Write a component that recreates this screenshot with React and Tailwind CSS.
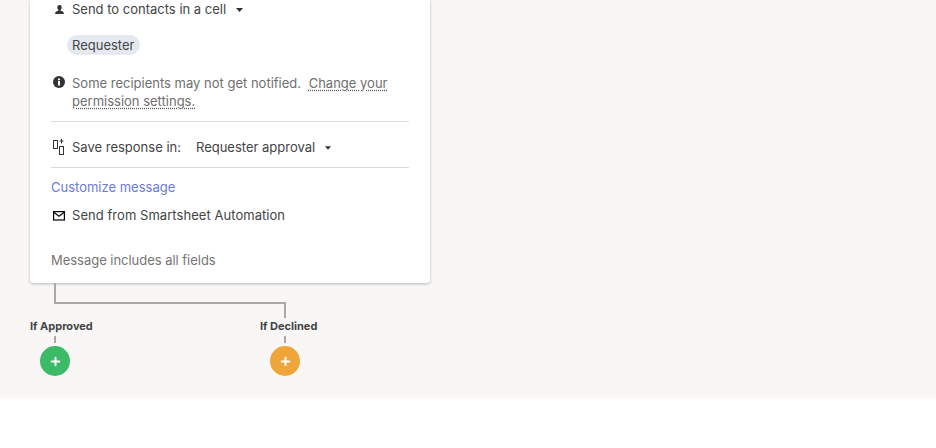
import React from "react";
import { Plus } from "lucide-react";

const Caret = ({ small }) => (
  <svg width={small ? 6 : 7} height={small ? 4 : 4} viewBox="0 0 7 4" className="shrink-0">
    <path d="M0 0h7L3.5 4z" fill="#333333" />
  </svg>
);

const PersonIcon = () => (
  <svg width="9" height="10" viewBox="0 0 10 11" className="shrink-0">
    <path d="M5 0a2.4 2.4 0 0 1 2.4 2.6c0 1.2-.5 2.2-1.2 2.8v.8c1.6.5 3.3 1.2 3.6 2.3v1.5H.2V8.500c.3-1.100 2-1.800 3.600-2.300v-.8C3.100 4.800 2.600 3.800 2.600 2.600A2.400 2.400 0 0 1 5 0z" fill="#333333" />
  </svg>
);

const InfoIcon = () => (
  <svg width="12" height="12" viewBox="0 0 12 12" className="shrink-0">
    <circle cx="6" cy="6" r="6" fill="#333333" />
    <rect x="5" y="5" width="2" height="4.500" fill="#ffffff" />
    <rect x="5" y="2.500" width="2" height="1.700" fill="#ffffff" />
  </svg>
);

const SaveIcon = () => (
  <svg width="13" height="17" viewBox="0 0 13 17" className="shrink-0" fill="none" stroke="#333333">
    <rect x="0.500" y="1.500" width="4" height="8" />
    <rect x="6.500" y="7.500" width="4" height="8" />
    <path d="M8.500 0v4.500M6.500 2h4" />
  </svg>
);

const MailIcon = () => (
  <svg width="12" height="10" viewBox="0 0 12 10" className="shrink-0" fill="none" stroke="#000000" strokeWidth="1.200">
    <rect x="0.600" y="0.600" width="10.800" height="8.400" />
    <path d="M0.500 1l5.500 4.200 5.500-4.200" />
  </svg>
);

const Branch = ({ label, color }) => (
  <div className="flex w-[230px] flex-col items-start">
    <div className="h-[16px] text-[11px] leading-[16px] font-bold text-[#444444]">{label}</div>
    <div className="ml-[24px] mt-[2px] h-[7px] w-[2px] bg-[#a8a8a6]" />
    <div className={`ml-[10px] mt-[3px] flex h-[30px] w-[30px] items-center justify-center rounded-full ${color}`}>
      <Plus size={13} color="#ffffff" strokeWidth={3.6} />
    </div>
  </div>
);

export default function App() {
  return (
    <div className="h-[448px] w-[936px] overflow-hidden bg-white font-['Inter',sans-serif] text-[13px] text-[#444444]">
      <div className="h-[398px] bg-[#f8f7f6] pl-[30px]">
        <div className="flex h-[283px] w-[400px] flex-col rounded-b-[3px] bg-white px-[21px] shadow-[0_1px_3px_rgba(0,0,0,0.25)]">
          <div className="flex h-[19px] items-center">
            <div className="flex w-[21px] justify-start pl-[4px]"><PersonIcon /></div>
            <span>Send to contacts in a cell</span>
            <span className="ml-[10px]"><Caret /></span>
          </div>

          <div className="mt-[16px] ml-[16px] self-start rounded-full bg-[#e4e9f0] pl-[5px] pr-[6px] text-[13px] leading-[20px]">
            Requester
          </div>

          <div className="mt-[19px] flex">
            <div className="w-[21px] pt-[2px] pl-[2px]"><InfoIcon /></div>
            <p className="w-[330px] leading-[18px] text-[#6f6f6f]">
              Some recipients may not get notified.{" "}
              <span className="ml-[4px] underline decoration-dotted decoration-[#555555] underline-offset-2">
                Change your
              </span>{" "}
              <span className="underline decoration-dotted decoration-[#555555] underline-offset-2">
                permission settings.
              </span>
            </p>
          </div>

          <div className="mt-[11px] h-px bg-[#dcdcdc]" />

          <div className="flex h-[45px] items-center pt-[6px]">
            <div className="w-[21px] pl-[2px]"><SaveIcon /></div>
            <span>Save response in:</span>
            <span className="ml-[15px]">Requester approval</span>
            <span className="ml-[10px] flex items-center"><Caret small /></span>
          </div>

          <div className="h-px bg-[#dcdcdc]" />

          <div className="mt-[10px] leading-[18px] text-[#6a7ae0]">Customize message</div>

          <div className="mt-[11px] flex h-[18px] items-center">
            <div className="w-[21px] pl-[2px]"><MailIcon /></div>
            <span className="tracking-[0.05px]">Send from Smartsheet Automation</span>
          </div>

          <div className="mt-[26px] leading-[18px] tracking-[-0.03px] text-[#757575]">Message includes all fields</div>
        </div>

        <div className="ml-[24px] h-[19px] w-[2px] bg-[#a8a8a6]" />
        <div className="ml-[24px] h-[16px] w-[232px] border-t-2 border-r-2 border-[#a8a8a6]" />
        <div className="flex">
          <Branch label="If Approved" color="bg-[#3cba65]" />
          <Branch label="If Declined" color="bg-[#f0a53a]" />
        </div>
      </div>
    </div>
  );
}
